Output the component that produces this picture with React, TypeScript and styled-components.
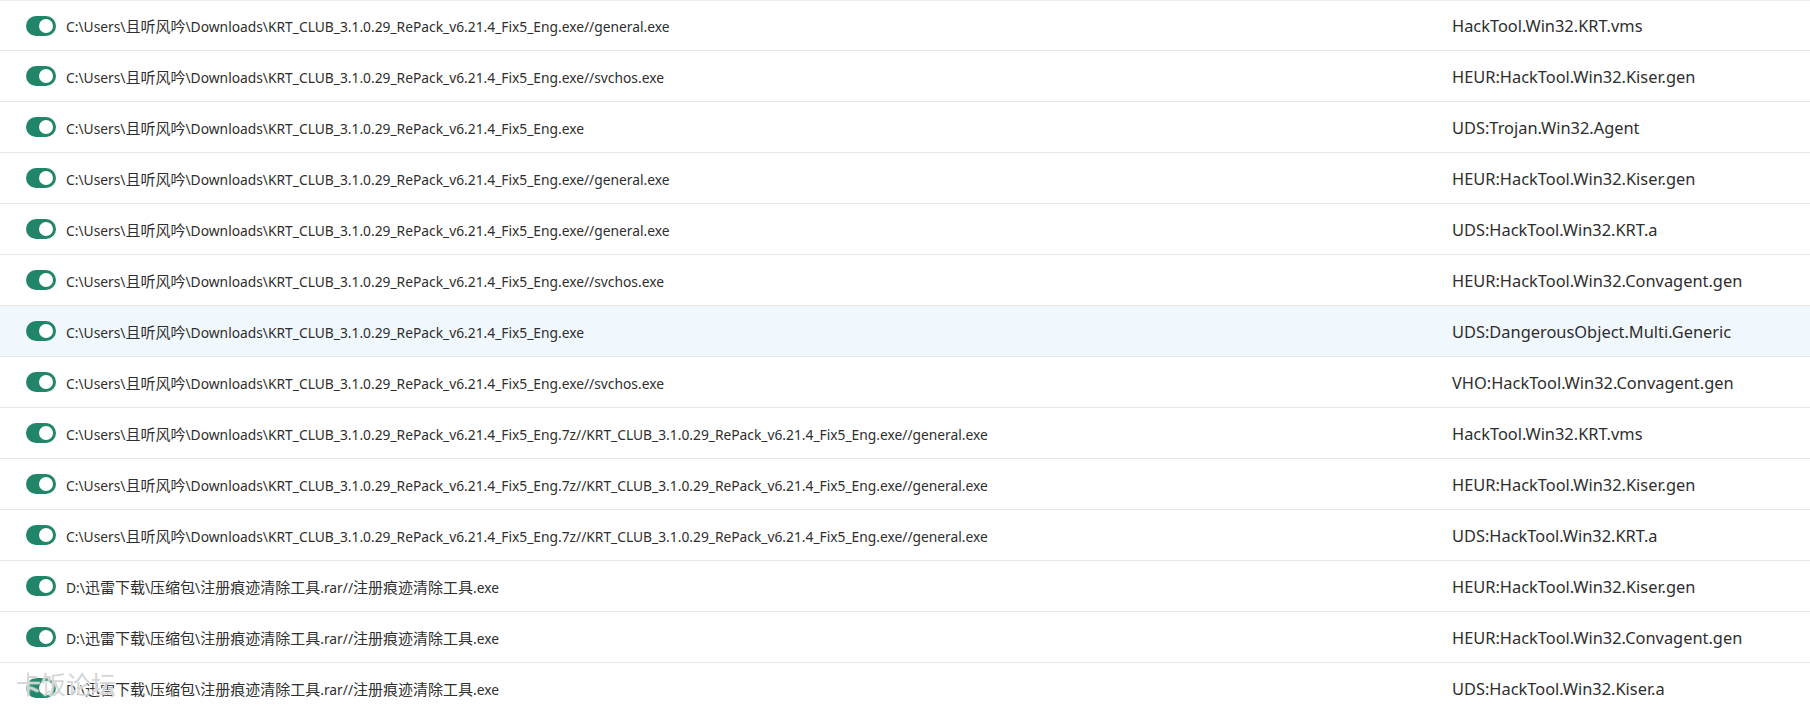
import React from "react";
import styled, { createGlobalStyle } from "styled-components";

const KRT = "C:\\Users\\且听风吟\\Downloads\\KRT_CLUB_3.1.0.29_RePack_v6.21.4_Fix5_Eng";
const REG = "D:\\迅雷下载\\压缩包\\注册痕迹清除工具.rar//注册痕迹清除工具.exe";

type Item = {
  path: string;
  threat: string;
  active?: boolean;
};

const items: Item[] = [
  { path: `${KRT}.exe//general.exe`, threat: "HackTool.Win32.KRT.vms" },
  { path: `${KRT}.exe//svchos.exe`, threat: "HEUR:HackTool.Win32.Kiser.gen" },
  { path: `${KRT}.exe`, threat: "UDS:Trojan.Win32.Agent" },
  { path: `${KRT}.exe//general.exe`, threat: "HEUR:HackTool.Win32.Kiser.gen" },
  { path: `${KRT}.exe//general.exe`, threat: "UDS:HackTool.Win32.KRT.a" },
  { path: `${KRT}.exe//svchos.exe`, threat: "HEUR:HackTool.Win32.Convagent.gen" },
  { path: `${KRT}.exe`, threat: "UDS:DangerousObject.Multi.Generic", active: true },
  { path: `${KRT}.exe//svchos.exe`, threat: "VHO:HackTool.Win32.Convagent.gen" },
  { path: `${KRT}.7z//KRT_CLUB_3.1.0.29_RePack_v6.21.4_Fix5_Eng.exe//general.exe`, threat: "HackTool.Win32.KRT.vms" },
  { path: `${KRT}.7z//KRT_CLUB_3.1.0.29_RePack_v6.21.4_Fix5_Eng.exe//general.exe`, threat: "HEUR:HackTool.Win32.Kiser.gen" },
  { path: `${KRT}.7z//KRT_CLUB_3.1.0.29_RePack_v6.21.4_Fix5_Eng.exe//general.exe`, threat: "UDS:HackTool.Win32.KRT.a" },
  { path: REG, threat: "HEUR:HackTool.Win32.Kiser.gen" },
  { path: REG, threat: "HEUR:HackTool.Win32.Convagent.gen" },
  { path: REG, threat: "UDS:HackTool.Win32.Kiser.a" },
];

// the CJK glyphs run a bit wider than the latin ones in the original font
function PathText({ text }: { text: string }) {
  const parts = text.split(/([\u4e00-\u9fff]+)/);
  return (
    <Path>
      {parts.map((part, i) =>
        i % 2 === 1 ? <Cjk key={i}>{part}</Cjk> : <React.Fragment key={i}>{part}</React.Fragment>
      )}
    </Path>
  );
}

function App() {
  return (
    <>
      <GlobalStyle />
      <Page>
        <List>
          {items.map((item, i) => (
            <Row key={i} $active={item.active}>
              <Toggle aria-checked="true" role="switch">
                <Knob />
              </Toggle>
              <PathText text={item.path} />
              <Threat>{item.threat}</Threat>
            </Row>
          ))}
        </List>
        <Watermark>卡饭论坛</Watermark>
      </Page>
    </>
  );
}

const GlobalStyle = createGlobalStyle`
  html, body {
    margin: 0;
    padding: 0;
    background: #ffffff;
    overflow: hidden;
  }
  body {
    font-family: "Noto Sans", "Noto Sans CJK SC", sans-serif;
  }
`;

const Page = styled.div`
  position: relative;
  width: 1810px;
  height: 709px;
  overflow: hidden;
  background: #ffffff;
`;

const List = styled.div`
  display: flex;
  flex-direction: column;
`;

const Row = styled.div<{ $active?: boolean }>`
  box-sizing: border-box;
  height: 51px;
  flex-shrink: 0;
  display: grid;
  grid-template-columns: 66px 1fr 358px;
  align-items: center;
  border-bottom: 1px solid ${(p) => (p.$active ? "#e1e7ee" : "#e8e8e8")};
  background: ${(p) => (p.$active ? "#f0f7fd" : "#ffffff")};

  &:first-child {
    border-top: 1px solid #eeeeee;
  }
`;

const Toggle = styled.div`
  box-sizing: border-box;
  margin-left: 26px;
  width: 30px;
  height: 20px;
  border-radius: 10px;
  background: #218569;
  display: flex;
  align-items: center;
  justify-content: flex-end;
  padding-right: 3px;
`;

const Knob = styled.span`
  width: 14px;
  height: 14px;
  border-radius: 50%;
  background: #ffffff;
`;

const Path = styled.div`
  font-size: 13.8px;
  color: #2e2e2e;
  white-space: nowrap;
  overflow: hidden;
`;

const Cjk = styled.span`
  font-family: "Noto Sans CJK SC", sans-serif;
  font-size: 15px;
`;

const Threat = styled.div`
  font-size: 16.4px;
  color: #2e2e2e;
  white-space: nowrap;
`;

const Watermark = styled.div`
  position: absolute;
  left: 16px;
  top: 666px;
  font-family: "Noto Sans CJK SC", sans-serif;
  font-size: 25px;
  line-height: 34px;
  color: rgba(170, 170, 170, 0.5);
  text-shadow: 0 0 2px #ffffff, 0 0 1px #ffffff;
  pointer-events: none;
`;

export default App;
